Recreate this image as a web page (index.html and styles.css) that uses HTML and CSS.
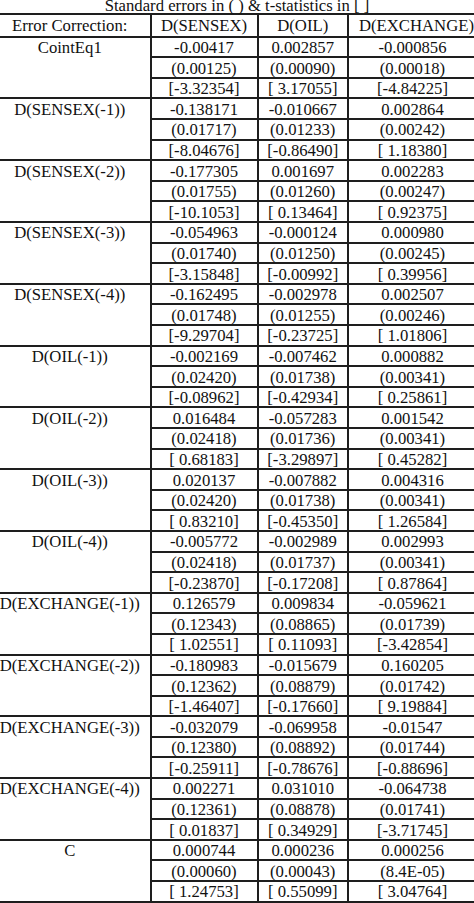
FILE: index.html
```html
<!DOCTYPE html>
<html lang="en">
<head>
<meta charset="utf-8">
<title>Error Correction</title>
<link rel="stylesheet" href="styles.css">
</head>
<body>
<div class="page">
  <div class="title">Standard errors in ( ) &amp; t-statistics in [ ]</div>
  <table class="vec">
    <colgroup>
      <col class="c-lab"><col class="c-sen"><col class="c-oil"><col class="c-exc">
    </colgroup>
    <thead>
      <tr><th class="lab">Error Correction:</th><th>D(SENSEX)</th><th>D(OIL)</th><th class="h-exc">D(EXCHANGE)</th></tr>
    </thead>
    <tbody>
      <tr><td class="lab" rowspan="3">CointEq1</td><td>-0.00417</td><td>0.002857</td><td>-0.000856</td></tr>
      <tr><td>(0.00125)</td><td>(0.00090)</td><td>(0.00018)</td></tr>
      <tr><td>[-3.32354]</td><td>[ 3.17055]</td><td>[-4.84225]</td></tr>

      <tr><td class="lab" rowspan="3">D(SENSEX(-1))</td><td>-0.138171</td><td>-0.010667</td><td>0.002864</td></tr>
      <tr><td>(0.01717)</td><td>(0.01233)</td><td>(0.00242)</td></tr>
      <tr><td>[-8.04676]</td><td>[-0.86490]</td><td>[ 1.18380]</td></tr>

      <tr><td class="lab" rowspan="3">D(SENSEX(-2))</td><td>-0.177305</td><td>0.001697</td><td>0.002283</td></tr>
      <tr><td>(0.01755)</td><td>(0.01260)</td><td>(0.00247)</td></tr>
      <tr><td>[-10.1053]</td><td>[ 0.13464]</td><td>[ 0.92375]</td></tr>

      <tr><td class="lab" rowspan="3">D(SENSEX(-3))</td><td>-0.054963</td><td>-0.000124</td><td>0.000980</td></tr>
      <tr><td>(0.01740)</td><td>(0.01250)</td><td>(0.00245)</td></tr>
      <tr><td>[-3.15848]</td><td>[-0.00992]</td><td>[ 0.39956]</td></tr>

      <tr><td class="lab" rowspan="3">D(SENSEX(-4))</td><td>-0.162495</td><td>-0.002978</td><td>0.002507</td></tr>
      <tr><td>(0.01748)</td><td>(0.01255)</td><td>(0.00246)</td></tr>
      <tr><td>[-9.29704]</td><td>[-0.23725]</td><td>[ 1.01806]</td></tr>

      <tr><td class="lab" rowspan="3">D(OIL(-1))</td><td>-0.002169</td><td>-0.007462</td><td>0.000882</td></tr>
      <tr><td>(0.02420)</td><td>(0.01738)</td><td>(0.00341)</td></tr>
      <tr><td>[-0.08962]</td><td>[-0.42934]</td><td>[ 0.25861]</td></tr>

      <tr><td class="lab" rowspan="3">D(OIL(-2))</td><td>0.016484</td><td>-0.057283</td><td>0.001542</td></tr>
      <tr><td>(0.02418)</td><td>(0.01736)</td><td>(0.00341)</td></tr>
      <tr><td>[ 0.68183]</td><td>[-3.29897]</td><td>[ 0.45282]</td></tr>

      <tr><td class="lab" rowspan="3">D(OIL(-3))</td><td>0.020137</td><td>-0.007882</td><td>0.004316</td></tr>
      <tr><td>(0.02420)</td><td>(0.01738)</td><td>(0.00341)</td></tr>
      <tr><td>[ 0.83210]</td><td>[-0.45350]</td><td>[ 1.26584]</td></tr>

      <tr><td class="lab" rowspan="3">D(OIL(-4))</td><td>-0.005772</td><td>-0.002989</td><td>0.002993</td></tr>
      <tr><td>(0.02418)</td><td>(0.01737)</td><td>(0.00341)</td></tr>
      <tr><td>[-0.23870]</td><td>[-0.17208]</td><td>[ 0.87864]</td></tr>

      <tr><td class="lab" rowspan="3">D(EXCHANGE(-1))</td><td>0.126579</td><td>0.009834</td><td>-0.059621</td></tr>
      <tr><td>(0.12343)</td><td>(0.08865)</td><td>(0.01739)</td></tr>
      <tr><td>[ 1.02551]</td><td>[ 0.11093]</td><td>[-3.42854]</td></tr>

      <tr><td class="lab" rowspan="3">D(EXCHANGE(-2))</td><td>-0.180983</td><td>-0.015679</td><td>0.160205</td></tr>
      <tr><td>(0.12362)</td><td>(0.08879)</td><td>(0.01742)</td></tr>
      <tr><td>[-1.46407]</td><td>[-0.17660]</td><td>[ 9.19884]</td></tr>

      <tr><td class="lab" rowspan="3">D(EXCHANGE(-3))</td><td>-0.032079</td><td>-0.069958</td><td>-0.01547</td></tr>
      <tr><td>(0.12380)</td><td>(0.08892)</td><td>(0.01744)</td></tr>
      <tr><td>[-0.25911]</td><td>[-0.78676]</td><td>[-0.88696]</td></tr>

      <tr><td class="lab" rowspan="3">D(EXCHANGE(-4))</td><td>0.002271</td><td>0.031010</td><td>-0.064738</td></tr>
      <tr><td>(0.12361)</td><td>(0.08878)</td><td>(0.01741)</td></tr>
      <tr><td>[ 0.01837]</td><td>[ 0.34929]</td><td>[-3.71745]</td></tr>

      <tr><td class="lab" rowspan="3">C</td><td>0.000744</td><td>0.000236</td><td>0.000256</td></tr>
      <tr><td>(0.00060)</td><td>(0.00043)</td><td>(8.4E-05)</td></tr>
      <tr><td>[ 1.24753]</td><td>[ 0.55099]</td><td>[ 3.04764]</td></tr>
    </tbody>
  </table>
</div>
</body>
</html>
```
FILE: styles.css
```css
html, body {
  margin: 0;
  padding: 0;
  background: #ffffff;
  overflow: hidden;
}

.page {
  width: 474px;
  height: 903px;
  overflow: hidden;
  font-family: "Liberation Serif", "Times New Roman", serif;
  font-size: 16.7px;
  color: #111111;
}

.title {
  height: 13px;
  line-height: 11px;
  text-align: center;
  white-space: pre;
}

.vec {
  border-collapse: collapse;
  table-layout: fixed;
  width: 487px;
  margin-left: -10px;
}

.c-lab { width: 160.5px; }
.c-sen { width: 107px; }
.c-oil { width: 90.5px; }
.c-exc { width: 129px; }

.vec th,
.vec td {
  border: 2px solid #1e1e1e;
  padding: 0;
  text-align: center;
  white-space: pre;
  font-weight: normal;
}

.vec th {
  padding-top: 2px;
  line-height: 18.7px;
  vertical-align: top;
}

.vec th.h-exc {
  padding-left: 8px;
}

.vec td {
  padding-top: 2.4px;
  line-height: 16.2px;
  vertical-align: top;
}

.vec .lab {
  border-left: none;
}
```
